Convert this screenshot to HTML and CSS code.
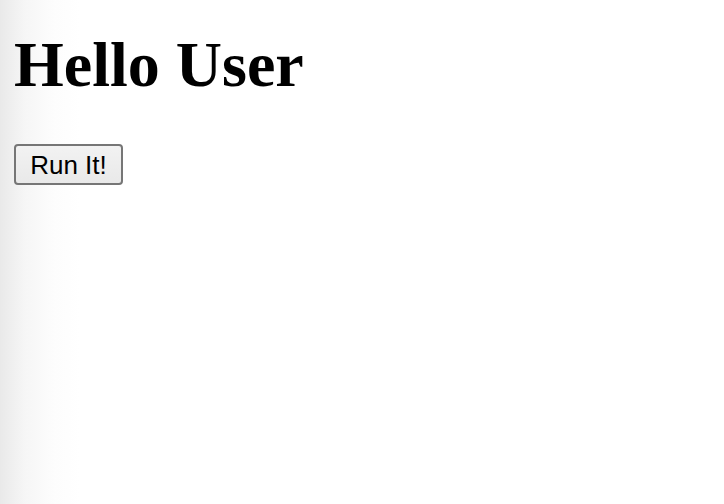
FILE: index.html
```html
<!DOCTYPE html>
<html>
<head>
<meta charset="utf-8">
<link rel="stylesheet" href="styles.css">
</head>
<body>
<main class="page">
  <h1 class="title">Hello User</h1>
  <div class="actions"><button class="run-btn" type="button">Run It!</button></div>
</main>
</body>
</html>
```
FILE: styles.css
```css
html, body {
  margin: 0;
  height: 100%;
}
body {
  background: linear-gradient(to right, #e9e9e9 0px, #f6f6f6 25px, #fdfdfd 55px, #ffffff 80px);
  font-family: "Liberation Serif", "Times New Roman", serif;
}
.page {
  padding: 28px 14px 0 14px;
  display: flex;
  flex-direction: column;
  align-items: flex-start;
}
.title {
  margin: 0;
  font-size: 64px;
  font-weight: bold;
  line-height: 73px;
  color: #000;
}
.actions {
  margin-top: 43px;
}
.run-btn {
  width: 109px;
  height: 41px;
  font-family: "Liberation Sans", Arial, sans-serif;
  font-size: 26px;
  line-height: 1;
  color: #000;
  background: linear-gradient(#f2f2f2, #e9e9e9);
  border: 2px solid #767676;
  border-radius: 4px;
  padding: 1px 0 0 0;
  margin: 0;
}
```
